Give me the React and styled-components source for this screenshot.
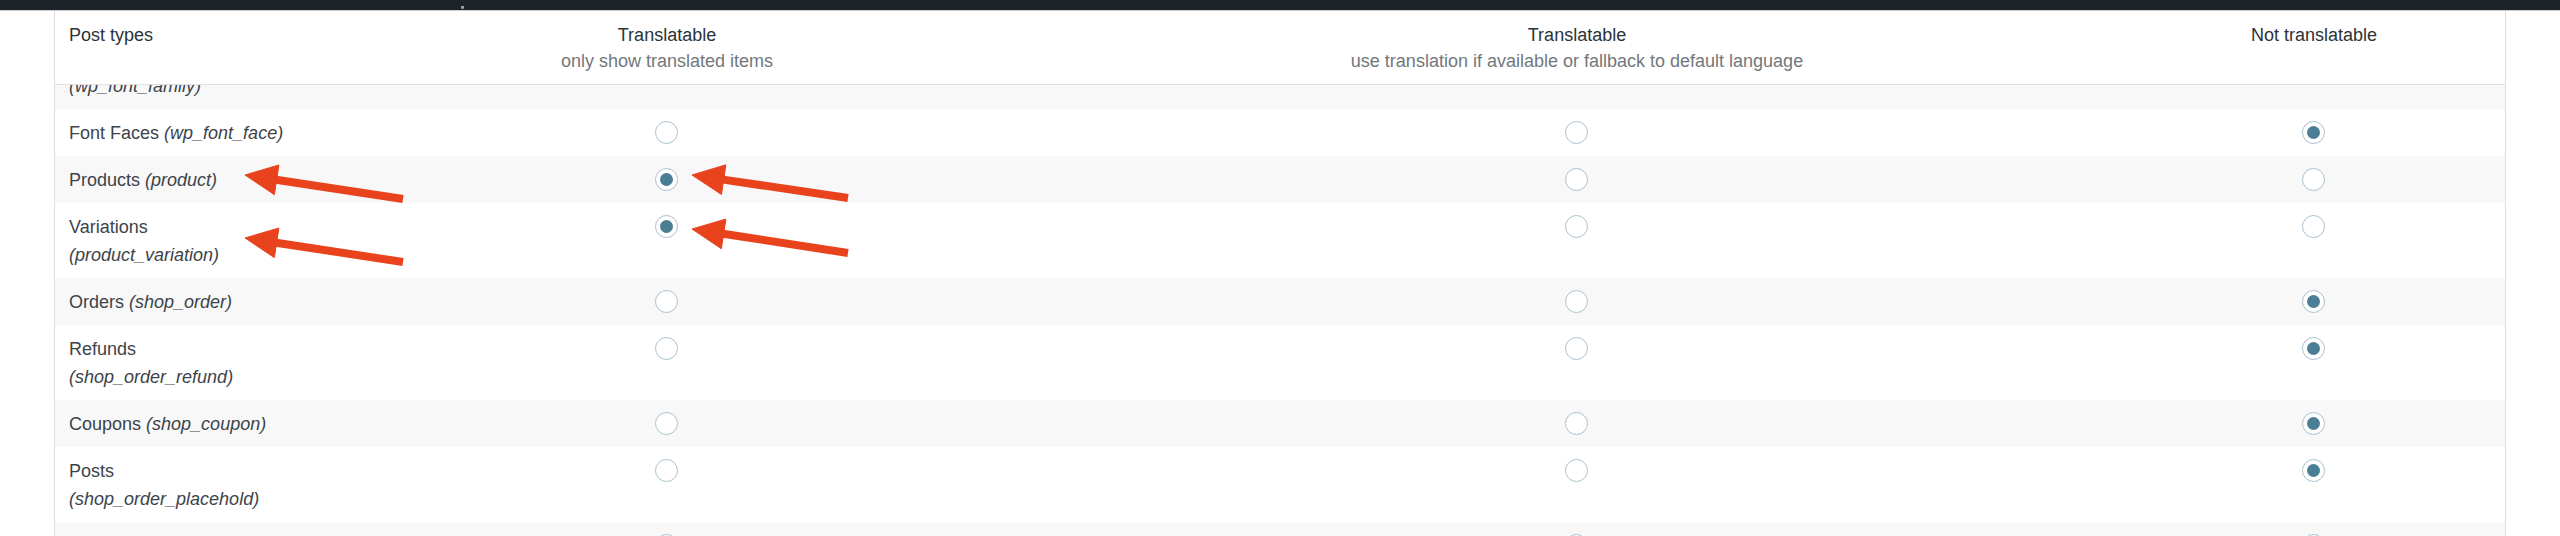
import React, { useLayoutEffect, useRef } from "react";
import styled, { createGlobalStyle } from "styled-components";

const GlobalStyle = createGlobalStyle`
  html, body {
    margin: 0;
    padding: 0;
    background: #fff;
  }
  body {
    font-family: "Liberation Sans", Arial, Helvetica, sans-serif;
    font-size: 18px;
    color: #3c434a;
  }
  * {
    box-sizing: border-box;
  }
`;

const COLS = "248px 728px 1092px 1fr";

const Screen = styled.div`
  position: relative;
  width: 2560px;
  height: 536px;
  overflow: hidden;
  display: flex;
  flex-direction: column;
`;

const AdminBar = styled.div`
  flex: none;
  height: 11px;
  background: #1d2327;
  border-bottom: 1px solid #c9cacc;
  padding-left: 461px;
`;

const BarGlyph = styled.span`
  display: block;
  width: 3px;
  height: 3px;
  margin-top: 6px;
  border-radius: 0 0 2px 2px;
  background: #9ea3a8;
`;

const Content = styled.div`
  flex: 1;
  min-height: 0;
  display: flex;
  padding: 0 54px;
`;

const Table = styled.div`
  flex: 1;
  min-height: 0;
  display: flex;
  flex-direction: column;
  border-left: 1px solid #dcdcde;
  border-right: 1px solid #dcdcde;
`;

const HeadRow = styled.div`
  flex: none;
  display: grid;
  grid-template-columns: ${COLS};
  border-bottom: 1px solid #e0e0e0;
`;

const HeadCell = styled.div`
  padding: 11px 14px 10px;
  line-height: 26px;
  text-align: ${(p) => p.$align || "center"};
  color: #2c3338;
`;

const HeadSub = styled.div`
  color: #72777c;
`;

const Body = styled.div`
  flex: 1;
  min-height: 0;
  overflow: hidden;
`;

const Row = styled.div`
  display: grid;
  grid-template-columns: ${COLS};
  background: ${(p) => (p.$striped ? "#f8f8f8" : "#fff")};
`;

const NameCell = styled.div`
  padding: 10px 14px 9px;
  line-height: 28px;
  white-space: nowrap;
`;

const Slug = styled.em`
  display: ${(p) => (p.$stacked ? "block" : "inline")};
`;

const ChoiceCell = styled.div`
  padding: 12px 10px 9px;
  display: flex;
  justify-content: center;
  align-items: flex-start;
`;

const Radio = styled.input.attrs({ type: "radio" })`
  appearance: none;
  -webkit-appearance: none;
  margin: 0 2px 0 0;
  width: 23px;
  height: 23px;
  border: 1.5px solid #a9c1ce;
  border-radius: 50%;
  background: #fff;
  display: grid;
  place-content: center;

  &:checked::before {
    content: "";
    width: 13px;
    height: 13px;
    border-radius: 50%;
    background: #4a7e95;
  }
`;

const Overlay = styled.svg`
  position: absolute;
  left: 0;
  top: 0;
  pointer-events: none;
`;

const CHOICES = ["translated", "fallback", "none"];

const rows = [
  { name: "Font Families", slug: "wp_font_family", stacked: true, value: "none" },
  { name: "Font Faces", slug: "wp_font_face", value: "none" },
  { name: "Products", slug: "product", value: "translated" },
  { name: "Variations", slug: "product_variation", stacked: true, value: "translated" },
  { name: "Orders", slug: "shop_order", value: "none" },
  { name: "Refunds", slug: "shop_order_refund", stacked: true, value: "none" },
  { name: "Coupons", slug: "shop_coupon", value: "none" },
  { name: "Posts", slug: "shop_order_placehold", stacked: true, value: "none" },
  { name: "Pages", slug: "page", value: "fallback" },
];

const arrows = [
  { tip: [245, 175], tail: [403, 199] },
  { tip: [245, 238], tail: [403, 262] },
  { tip: [692, 175], tail: [848, 198] },
  { tip: [692, 229], tail: [848, 253] },
];

function Arrow({ tip, tail }) {
  const [x1, y1] = tip;
  const [x2, y2] = tail;
  const len = Math.hypot(x2 - x1, y2 - y1);
  const ux = (x2 - x1) / len;
  const uy = (y2 - y1) / len;
  const head = 32;
  const half = 15;
  const bx = x1 + ux * head;
  const by = y1 + uy * head;
  const pts = [
    [x1, y1],
    [bx - uy * half, by + ux * half],
    [bx + uy * half, by - ux * half],
  ]
    .map((p) => p.join(","))
    .join(" ");
  return (
    <g fill="#e8431d" stroke="#e8431d">
      <line x1={bx - ux * 4} y1={by - uy * 4} x2={x2} y2={y2} strokeWidth="8" />
      <polygon points={pts} strokeWidth="1" strokeLinejoin="miter" />
    </g>
  );
}

export default function App() {
  const bodyRef = useRef(null);

  // the list is scrolled a little under the header
  useLayoutEffect(() => {
    if (bodyRef.current) bodyRef.current.scrollTop = 51;
  }, []);

  return (
    <>
      <GlobalStyle />
      <Screen>
        <AdminBar>
          <BarGlyph />
        </AdminBar>
        <Content>
          <Table>
            <HeadRow>
              <HeadCell $align="left">Post types</HeadCell>
              <HeadCell>
                Translatable
                <HeadSub>only show translated items</HeadSub>
              </HeadCell>
              <HeadCell>
                Translatable
                <HeadSub>use translation if available or fallback to default language</HeadSub>
              </HeadCell>
              <HeadCell>Not translatable</HeadCell>
            </HeadRow>
            <Body ref={bodyRef}>
              {rows.map((r, i) => (
                <Row key={r.slug} $striped={i % 2 === 0}>
                  <NameCell>
                    {r.name} <Slug $stacked={r.stacked}>({r.slug})</Slug>
                  </NameCell>
                  {CHOICES.map((c) => (
                    <ChoiceCell key={c}>
                      <Radio name={r.slug} value={c} defaultChecked={r.value === c} />
                    </ChoiceCell>
                  ))}
                </Row>
              ))}
            </Body>
          </Table>
        </Content>
        <Overlay width="2560" height="536" viewBox="0 0 2560 536">
          {arrows.map((a, i) => (
            <Arrow key={i} {...a} />
          ))}
        </Overlay>
      </Screen>
    </>
  );
}
